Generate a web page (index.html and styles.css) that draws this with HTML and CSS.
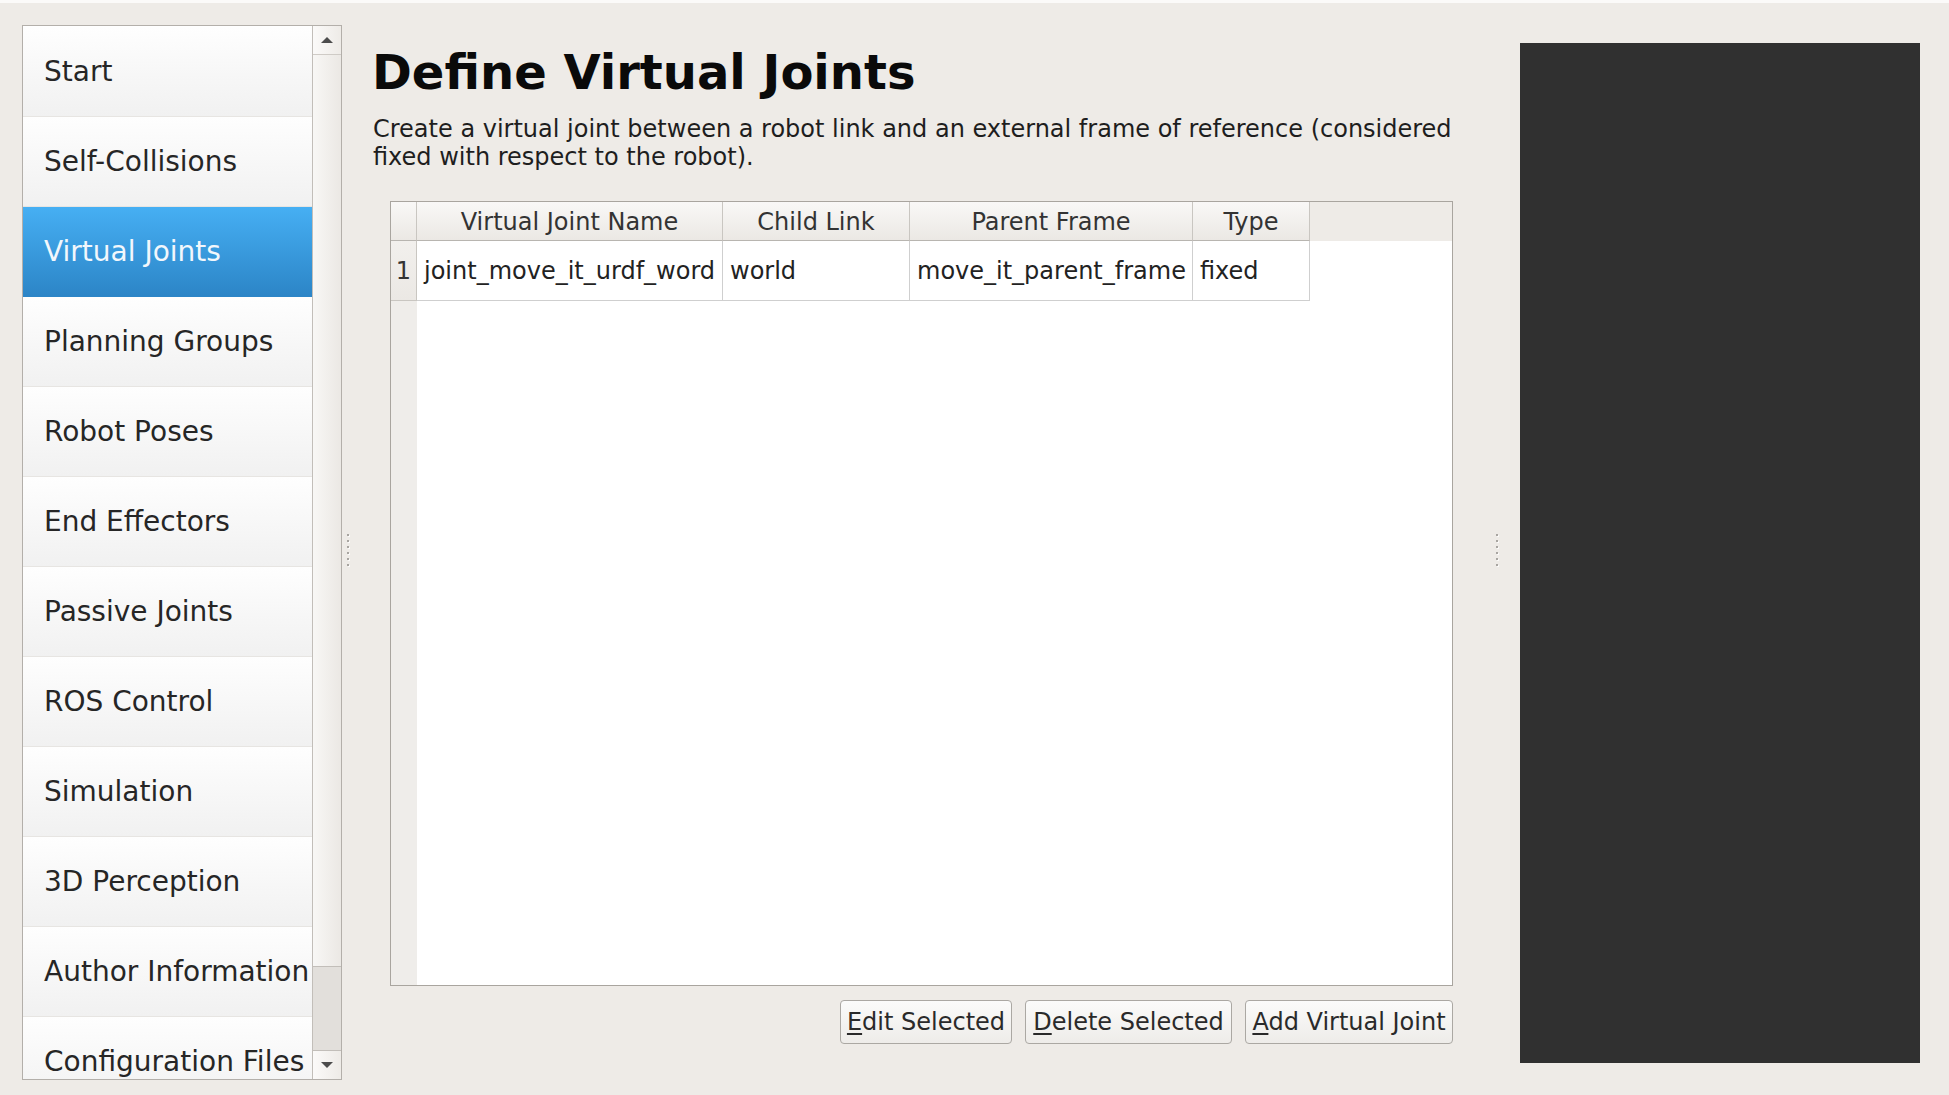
FILE: index.html
```html
<!DOCTYPE html>
<html>
<head>
<meta charset="utf-8">
<link rel="stylesheet" href="styles.css">
</head>
<body>
<div class="topline"></div>
<div class="main">
  <div class="sidebar">
    <div class="list">
      <div class="item">Start</div>
      <div class="item">Self-Collisions</div>
      <div class="item selected">Virtual Joints</div>
      <div class="item">Planning Groups</div>
      <div class="item">Robot Poses</div>
      <div class="item">End Effectors</div>
      <div class="item">Passive Joints</div>
      <div class="item">ROS Control</div>
      <div class="item">Simulation</div>
      <div class="item">3D Perception</div>
      <div class="item">Author Information</div>
      <div class="item">Configuration Files</div>
    </div>
    <div class="scrollbar">
      <div class="sb-btn sb-up"><span class="tri-up"></span></div>
      <div class="sb-track"></div>
      <div class="sb-thumb"></div>
      <div class="sb-btn sb-down"><span class="tri-down"></span></div>
    </div>
  </div>
  <div class="splitter split-left"><div class="dots"><i></i><i></i><i></i><i></i><i></i><i></i></div></div>
  <div class="content">
    <h1 class="title">Define Virtual Joints</h1>
    <p class="desc">Create a virtual joint between a robot link and an external frame of reference (considered<br>fixed with respect to the robot).</p>
    <div class="table">
      <div class="thead">
        <div class="corner"></div>
        <div class="th c1">Virtual Joint Name</div>
        <div class="th c2">Child Link</div>
        <div class="th c3">Parent Frame</div>
        <div class="th c4">Type</div>
        <div class="th-fill"></div>
      </div>
      <div class="tbody">
        <div class="vhead">
          <div class="rownum">1</div>
        </div>
        <div class="cells">
          <div class="row">
            <div class="td c1">joint_move_it_urdf_word</div>
            <div class="td c2">world</div>
            <div class="td c3">move_it_parent_frame</div>
            <div class="td c4">fixed</div>
          </div>
        </div>
      </div>
    </div>
    <div class="buttons">
      <button class="btn btn-edit"><u>E</u>dit Selected</button>
      <button class="btn btn-del"><u>D</u>elete Selected</button>
      <button class="btn btn-add"><u>A</u>dd Virtual Joint</button>
    </div>
  </div>
  <div class="splitter split-right"><div class="dots"><i></i><i></i><i></i><i></i><i></i><i></i></div></div>
  <div class="viewer"></div>
</div>
</body>
</html>
```

FILE: styles.css
```css
html, body {
  margin: 0;
  padding: 0;
}
body {
  width: 1949px;
  height: 1095px;
  overflow: hidden;
  background: #eeebe7;
  font-family: "DejaVu Sans", "Liberation Sans", sans-serif;
  color: #222;
}
.topline {
  height: 3px;
  background: #fbfaf9;
}
.main {
  display: flex;
  padding: 22px 0 0 22px;
  height: 1060px;
}

/* sidebar */
.sidebar {
  width: 320px;
  height: 1055px;
  box-sizing: border-box;
  border: 1px solid #b3afaa;
  display: flex;
  background: #fff;
  flex: none;
}
.list {
  width: 289px;
  overflow: hidden;
  padding-top: 1px;
}
.item {
  height: 90px;
  box-sizing: border-box;
  display: flex;
  align-items: center;
  padding-left: 21px;
  font-size: 28px;
  color: #262626;
  white-space: nowrap;
  background: linear-gradient(#fefefe, #f1f1f1);
  border-bottom: 1px solid #e7e5e2;
}
.item.selected {
  background: linear-gradient(#46aff3, #2c85c7);
  color: #f2f7fc;
  border-bottom-color: #2c85c7;
}
.scrollbar {
  width: 29px;
  box-sizing: border-box;
  border-left: 1px solid #c2beb9;
  display: flex;
  flex-direction: column;
  background: linear-gradient(to right, #f8f7f5, #ebe8e4);
}
.sb-btn {
  height: 28px;
  flex: none;
  display: flex;
  align-items: center;
  justify-content: center;
  background: linear-gradient(to right, #fbfaf9, #eeebe7);
}
.sb-up {
  border-bottom: 1px solid #cfcbc6;
}
.sb-down {
  border-top: 1px solid #c2beb9;
}
.sb-track {
  flex: 1;
}
.sb-thumb {
  height: 83px;
  flex: none;
  border-top: 1px solid #c2beb9;
  background: #e2dfdb;
}
.tri-up {
  width: 0;
  height: 0;
  border-left: 6px solid transparent;
  border-right: 6px solid transparent;
  border-bottom: 6px solid #4c4c4c;
}
.tri-down {
  width: 0;
  height: 0;
  border-left: 6px solid transparent;
  border-right: 6px solid transparent;
  border-top: 6px solid #4c4c4c;
}

/* splitters */
.splitter {
  flex: none;
  display: flex;
  align-items: center;
}
.split-left {
  width: 31px;
  padding-left: 5px;
  box-sizing: border-box;
}
.split-right {
  width: 67px;
  padding-left: 43px;
  box-sizing: border-box;
}
.dots {
  display: flex;
  flex-direction: column;
  gap: 4px;
  margin-top: -10px;
}
.dots i {
  display: block;
  width: 2px;
  height: 2px;
  background: #a8a5a1;
  box-shadow: 1px 1px 0 #fbfaf9;
}

/* content */
.content {
  width: 1080px;
  flex: none;
  padding-top: 19px;
}
.title {
  margin: 0 0 0 -1px;
  font-size: 48px;
  line-height: 56px;
  font-weight: bold;
  color: #0a0a0a;
}
.desc {
  margin: 15px 0 0 0;
  font-size: 24px;
  line-height: 28px;
  color: #1e1e1e;
  white-space: nowrap;
}
.table {
  margin: 30px 0 0 17px;
  width: 1063px;
  height: 785px;
  box-sizing: border-box;
  border: 1px solid #a9a59f;
  display: flex;
  flex-direction: column;
  background: #fff;
}
.thead {
  display: flex;
  height: 39px;
  flex: none;
  background: #eeebe7;
}
.corner, .th {
  box-sizing: border-box;
  height: 39px;
  border-right: 1px solid #c9c6c1;
  border-bottom: 1px solid #b8b5b0;
  background: linear-gradient(#f9f8f7, #ebe8e4);
}
.corner {
  width: 26px;
}
.th {
  display: flex;
  align-items: center;
  justify-content: center;
  padding-top: 2px;
  font-size: 24px;
  color: #333;
  white-space: nowrap;
}
.c1 { width: 306px; }
.c2 { width: 187px; }
.c3 { width: 283px; }
.c4 { width: 117px; }
.th-fill {
  flex: 1;
}
.tbody {
  flex: 1;
  display: flex;
}
.vhead {
  width: 26px;
  box-sizing: border-box;
  background: #efedea;
}
.rownum {
  height: 60px;
  box-sizing: border-box;
  border-right: 1px solid #c9c6c1;
  border-bottom: 1px solid #c9c6c1;
  display: flex;
  align-items: center;
  justify-content: center;
  font-size: 24px;
  color: #333;
  background: linear-gradient(#f2f0ed, #ebe8e4);
}
.cells {
  flex: 1;
}
.row {
  display: flex;
  height: 60px;
}
.td {
  box-sizing: border-box;
  height: 60px;
  border-right: 1px solid #cfcfcf;
  border-bottom: 1px solid #cfcfcf;
  display: flex;
  align-items: center;
  padding-left: 7px;
  font-size: 24px;
  color: #222;
  white-space: nowrap;
}
.td.c1 { width: 306px; padding-left: 7px; }

/* buttons */
.buttons {
  display: flex;
  justify-content: flex-end;
  gap: 13px;
  margin-top: 14px;
}
.btn {
  height: 44px;
  box-sizing: border-box;
  border: 1px solid #aba8a3;
  border-radius: 4px;
  background: linear-gradient(#fbfbfa, #eeece9);
  font-family: "DejaVu Sans", "Liberation Sans", sans-serif;
  font-size: 24px;
  color: #2a2a2a;
  padding: 0;
  white-space: nowrap;
}
.btn u {
  text-underline-offset: 3px;
}
.btn-edit { width: 172px; }
.btn-del { width: 207px; }
.btn-add { width: 208px; }

/* viewer */
.viewer {
  width: 400px;
  height: 1020px;
  margin-top: 18px;
  background: #303030;
  flex: none;
}
```
